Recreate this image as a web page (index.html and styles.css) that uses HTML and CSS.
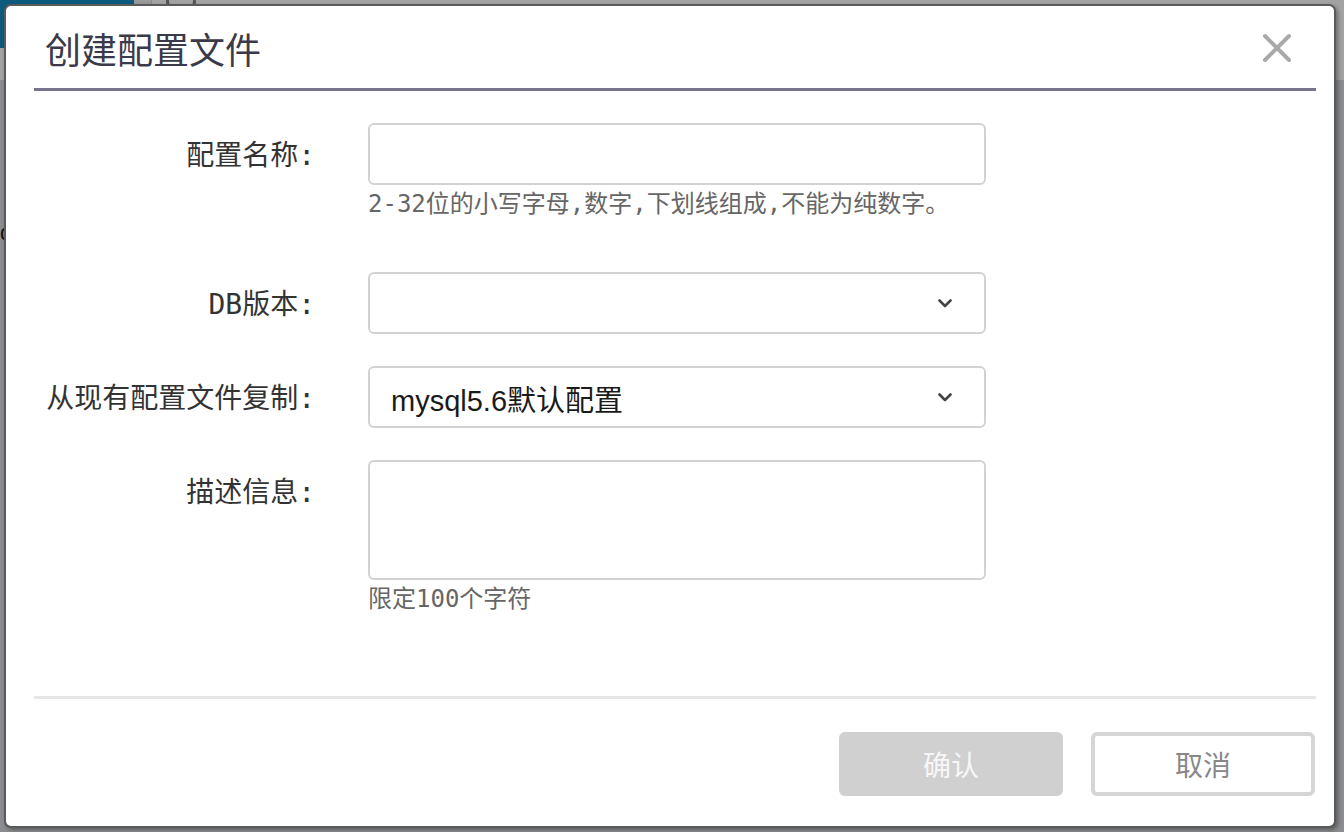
FILE: index.html
```html
<!DOCTYPE html>
<html lang="zh-CN">
<head>
<meta charset="utf-8">
<title>创建配置文件</title>
<link rel="stylesheet" href="styles.css">
</head>
<body>
<div class="backdrop">
  <div class="topbar">
    <div class="brand"></div>
    <div class="topbar-sep"></div>
    <div class="avatar"></div>
  </div>
  <div class="side-text">d</div>
</div>

<div class="modal">
  <div class="modal-header">
    <h1 class="modal-title">创建配置文件</h1>
    <button class="close-btn" aria-label="close">
      <svg width="30" height="30" viewBox="0 0 30 30"><path d="M3 3 L27 27 M27 3 L3 27" stroke="#a9a9a9" stroke-width="4" stroke-linecap="round" fill="none"/></svg>
    </button>
  </div>

  <div class="modal-body">
    <div class="form-row row-name">
      <label class="form-label">配置名称:</label>
      <div class="form-field">
        <div class="input"></div>
        <div class="hint">2-32位的小写字母,数字,下划线组成,不能为纯数字。</div>
      </div>
    </div>

    <div class="form-row">
      <label class="form-label">DB版本:</label>
      <div class="form-field">
        <div class="input select">
          <span class="select-value"></span>
          <svg class="chevron" width="14" height="9" viewBox="0 0 14 9"><path d="M1.5 1.5 L7 7 L12.5 1.5" stroke="#444" stroke-width="2.6" fill="none" stroke-linecap="round" stroke-linejoin="round"/></svg>
        </div>
      </div>
    </div>

    <div class="form-row">
      <label class="form-label">从现有配置文件复制:</label>
      <div class="form-field">
        <div class="input select">
          <span class="select-value">mysql5.6默认配置</span>
          <svg class="chevron" width="14" height="9" viewBox="0 0 14 9"><path d="M1.5 1.5 L7 7 L12.5 1.5" stroke="#444" stroke-width="2.6" fill="none" stroke-linecap="round" stroke-linejoin="round"/></svg>
        </div>
      </div>
    </div>

    <div class="form-row">
      <label class="form-label">描述信息:</label>
      <div class="form-field">
        <div class="input textarea"></div>
        <div class="hint">限定100个字符</div>
      </div>
    </div>
  </div>

  <div class="modal-footer">
    <button class="btn btn-primary">确认</button>
    <button class="btn btn-default">取消</button>
  </div>
</div>
</body>
</html>
```

FILE: styles.css
```css
* { box-sizing: border-box; }

html, body {
  margin: 0;
  padding: 0;
  width: 1344px;
  height: 832px;
  overflow: hidden;
}

body {
  background: #8d8d8f;
  font-family: "DejaVu Sans Mono", "Noto Sans CJK SC", monospace;
  position: relative;
}

.backdrop {
  position: absolute;
  inset: 0;
  background: #8c8d90;
}

.topbar {
  display: flex;
  height: 80px;
  background: #a3a3a3;
}

.brand {
  width: 134px;
  height: 48px;
  background: #0c5b7d;
}

.topbar-sep {
  width: 18px;
  height: 80px;
  background: #9a9a9a;
  border-right: 1px solid #8a8a8a;
}

.avatar {
  width: 30px;
  height: 30px;
  margin: -14px 0 0 14px;
  border-radius: 50%;
  border: 3px solid #555;
}

.side-text {
  position: absolute;
  left: 0;
  top: 220px;
  font-size: 22px;
  color: #111;
  font-family: "Liberation Sans", sans-serif;
}

.modal {
  position: absolute;
  left: 4px;
  top: 4px;
  width: 1332px;
  height: 824px;
  background: #fff;
  border: 2px solid #5a5a5a;
  border-radius: 7px;
  box-shadow: 2px 2px 4px rgba(0,0,0,0.35);
  display: flex;
  flex-direction: column;
}

.modal-header {
  height: 85px;
  margin: 0 18px 0 28px;
  border-bottom: 3px solid #79748e;
  display: flex;
  align-items: center;
  justify-content: space-between;
  padding: 1px 24px 0 11px;
}

.modal-title {
  margin: 0;
  font-size: 36px;
  font-weight: normal;
  color: #3a3a4a;
  font-family: "Noto Sans CJK SC", sans-serif;
  line-height: 1;
}

.close-btn {
  border: 0;
  background: transparent;
  padding: 0;
  width: 30px;
  height: 30px;
  display: flex;
}

.modal-body {
  flex: 1;
  padding-top: 32px;
  display: flex;
  flex-direction: column;
  gap: 32px;
}

.form-row {
  display: flex;
  align-items: flex-start;
}

.row-name {
  margin-bottom: 19px;
}

.form-label {
  width: 309px;
  text-align: right;
  font-size: 28px;
  line-height: 62px;
  height: 62px;
  padding-top: 2px;
  color: #333;
  white-space: nowrap;
}

.form-field {
  margin-left: 53px;
  width: 618px;
}

.input {
  height: 62px;
  border: 2px solid #d2d2d2;
  border-radius: 6px;
  background: #fff;
}

.select {
  display: flex;
  align-items: center;
  justify-content: space-between;
  padding: 2px 32px 0 21px;
}

.select-value {
  font-family: "Liberation Sans", "Noto Sans CJK SC", sans-serif;
  font-size: 29px;
  color: #1a1a1a;
}

.chevron {
  flex: none;
  margin-top: -1px;
}

.textarea {
  height: 120px;
}

.hint {
  margin-top: 2px;
  font-size: 24px;
  line-height: 34px;
  color: #666;
  white-space: nowrap;
}

.modal-footer {
  height: 130px;
  margin: 0 18px 0 28px;
  border-top: 3px solid #e6e6e6;
  display: flex;
  justify-content: flex-end;
  align-items: flex-start;
  gap: 28px;
  padding-top: 33px;
}

.btn {
  width: 224px;
  height: 64px;
  border-radius: 6px;
  font-family: "Noto Sans CJK SC", sans-serif;
  font-size: 28px;
  padding: 0;
}

.btn-primary {
  background: #d0d0d0;
  border: 0;
  color: #f7f7f7;
}

.btn-default {
  background: #fff;
  border: 4px solid #d6d6d6;
  color: #888;
  margin-right: 1px;
}
```
